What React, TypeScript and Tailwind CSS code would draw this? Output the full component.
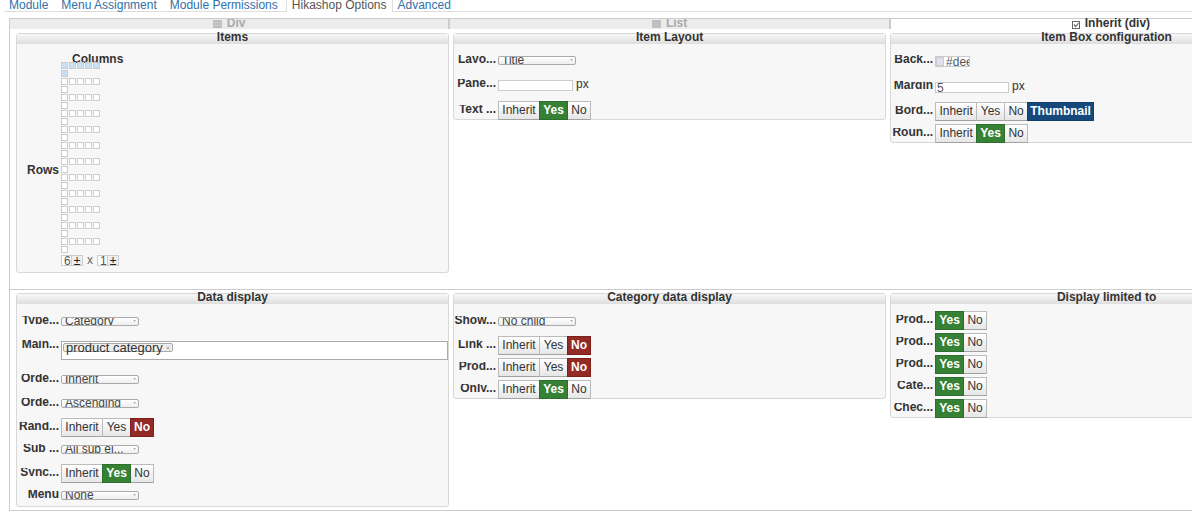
import type { ReactNode } from "react";

const navLinks = ["Module", "Menu Assignment", "Module Permissions", "Hikashop Options", "Advanced"];

function Panel({ title, children }: { title: string; children: ReactNode }) {
  return (
    <section className="self-start rounded-[3px] border border-[#d8d8d8] bg-[#f7f7f7]">
      <h2 className="h-[10px] bg-linear-to-b from-[#f8f8f8] to-[#dedede] text-center text-[12px] leading-[7px] font-bold text-[#333]">
        {title}
      </h2>
      {children}
    </section>
  );
}

const margins = {
  first: "mt-[12px]",
  lowerFirst: "mt-[13px]",
  wide: "mt-[15px]",
  medium: "mt-[10px]",
  snug: "mt-[9px]",
  small: "mt-[7px]",
  tight: "mt-[4px]",
};

function Field({
  label,
  id,
  gap = "wide",
  tall = false,
  children,
}: {
  label: string;
  id: string;
  gap?: keyof typeof margins;
  tall?: boolean;
  children: ReactNode;
}) {
  return (
    <div className={`flex items-start ${margins[gap]}`}>
      <label
        htmlFor={id}
        className={`mr-[2px] h-[8px] w-[42px] shrink-0 overflow-hidden text-right text-[12px] leading-[8px] font-bold whitespace-nowrap text-[#333] ${
          tall ? "mt-[4px]" : "-mt-px"
        }`}
      >
        {label}
      </label>
      {children}
    </div>
  );
}

function Select({ id, value }: { id: string; value: string }) {
  return (
    <div className="relative h-[9px] w-[78px]">
      <select
        id={id}
        className="block h-[9px] w-full appearance-none overflow-hidden rounded-[2px] border border-[#aaa] bg-linear-to-b from-white to-[#eee] pl-[3px] text-[12px] leading-[7px] text-[#444]"
      >
        <option>{value}</option>
      </select>
      <svg viewBox="0 0 4 3" className="pointer-events-none absolute top-[3px] right-[3px] h-[2px] w-[3px] fill-[#aaa]">
        <path d="M0 0H4L2 3Z" />
      </svg>
    </div>
  );
}

function Choices({ id, options, active }: { id: string; options: string[]; active: string }) {
  const colors: Record<string, string> = {
    Yes: "border-[#2c6e2c] bg-[#378137]",
    No: "border-[#7c1f1c] bg-[#942a25]",
    Thumbnail: "border-[#0f3f6b] bg-[#15497c]",
  };
  const widths: Record<string, string> = {
    Inherit: "w-[42px]",
    Yes: "w-[29px]",
    No: "w-[24px]",
    Thumbnail: "w-[67px]",
  };
  return (
    <div id={id} role="group" className="-mb-px flex">
      {options.map((o, i) => (
        <button
          key={o}
          type="button"
          aria-pressed={o === active}
          className={`h-[19px] border text-center text-[12px] leading-[17px] ${i > 0 ? "-ml-px" : ""} ${widths[o]} ${
            o === active
              ? `relative font-bold text-white ${colors[o]}`
              : "border-[#bbb] border-b-[#a2a2a2] bg-linear-to-b from-white to-[#e6e6e6] text-[#333]"
          }`}
        >
          {o}
        </button>
      ))}
    </div>
  );
}

function Counter({ label, value }: { label: string; value: string }) {
  return (
    <span className="flex h-[11px]">
      <input
        aria-label={label}
        defaultValue={value}
        className="h-[11px] w-[11px] border border-[#ccc] bg-white pl-[2px] text-[12px] leading-[9px] text-[#555]"
      />
      <button
        type="button"
        className="-ml-px h-[11px] w-[12px] border border-[#ccc] bg-[#eee] text-[12px] leading-[8px] text-[#222]"
      >
        ±
      </button>
    </span>
  );
}

function TypeIcon({ kind }: { kind: "div" | "list" | "inherit" }) {
  if (kind === "inherit") {
    return (
      <svg viewBox="0 0 8 8" className="mt-[2px] h-[8px] w-[8px]" fill="none" stroke="#666">
        <rect x="0.5" y="0.5" width="7" height="7" />
        <path d="M2 3.5L3.7 5.5L6.5 2" strokeWidth="1.2" />
      </svg>
    );
  }
  return (
    <svg viewBox="0 0 9 8" className="mt-[1px] h-[8px] w-[9px]">
      <rect width="9" height="8" rx="1" fill="#bdbdbd" />
      {kind === "div" ? (
        <path d="M1 2.5H8M1 5.5H8" stroke="#dadada" strokeDasharray="1.5 1" />
      ) : (
        <path d="M1 2.5H8M1 4.5H8M1 6.5H8" stroke="#cacaca" strokeWidth="0.6" />
      )}
    </svg>
  );
}

export default function App() {
  const triple = ["Inherit", "Yes", "No"];
  return (
    <main className="overflow-hidden bg-white pb-3 font-['Liberation_Sans',Arial,sans-serif] text-[12px] text-[#333]">
      <nav className="ml-1 flex h-[12px] border-b border-[#ddd]">
        {navLinks.map((l) => (
          <a
            key={l}
            href="#"
            className={`h-[12px] leading-[10px] whitespace-nowrap ${
              l === "Hikashop Options"
                ? "border-x border-[#ddd] bg-white px-[5px] text-[#555]"
                : "pr-[8px] pl-[5px] text-[#3071a9]"
            }`}
          >
            {l}
          </a>
        ))}
      </nav>

      <div className="mt-[6px] ml-[9px] w-[111%] border border-[#ccc]">
        <div className="grid grid-cols-3 text-[12px] leading-[8px] font-bold">
          <button type="button" className="flex h-[10px] justify-center gap-[5px] overflow-hidden border-r-2 border-[#ccc] bg-[#ececec] text-[#aaa]">
            <TypeIcon kind="div" />
            Div
          </button>
          <button type="button" className="flex h-[10px] justify-center gap-[5px] overflow-hidden border-r-2 border-[#ccc] bg-[#ececec] text-[#aaa]">
            <TypeIcon kind="list" />
            List
          </button>
          <button type="button" className="flex h-[10px] justify-center gap-[5px] bg-white">
            <TypeIcon kind="inherit" />
            Inherit (div)
          </button>
        </div>

        <div className="grid grid-cols-3 gap-x-1 border-b border-[#ccc] pt-1 pr-2 pb-4 pl-[6px]">
          <Panel title="Items">
            <div className="mt-[11px] ml-[55px] h-[7px] text-[12px] leading-[8px] font-bold">Columns</div>
            <div className="flex items-center">
              <div className="w-[42px] shrink-0 pt-6 text-right text-[12px] font-bold">Rows</div>
              <div className="relative ml-[2px] grid grid-cols-5 gap-px">
                {Array.from({ length: 72 }, (_, i) => (
                  <button
                    key={i}
                    type="button"
                    aria-label={`${Math.floor(i / 6) + 1} x ${(i % 6) + 1}`}
                    className={`h-[7px] w-[7px] border border-[#ccc] ${i < 6 ? "bg-[#c9dff3]" : "bg-white"} ${
                      i % 6 === 0 ? "col-start-1" : ""
                    }`}
                  />
                ))}
              </div>
            </div>
            <div className="mt-[2px] mb-[6px] ml-[44px] flex items-center gap-1 leading-[11px] text-[#666]">
              <Counter label="Columns" value="6" />x<Counter label="Rows" value="1" />
            </div>
          </Panel>
          <Panel title="Item Layout">
            <Field label="Layo..." id="layout" gap="first">
              <Select id="layout" value="Title" />
            </Field>
            <Field label="Pane..." id="pane">
              <input id="pane" className="h-[11px] w-[75px] border border-[#ccc] bg-white" />
              <span className="ml-[3px] leading-[9px]">px</span>
            </Field>
            <Field label="Text ..." id="textcenter" gap="medium" tall>
              <Choices id="textcenter" options={triple} active="Yes" />
            </Field>
          </Panel>
          <Panel title="Item Box configuration">
            <Field label="Back..." id="background" gap="first">
              <span className="flex h-[11px] border border-[#ccc] bg-white">
                <span className="w-[8px] border border-[#ccc] bg-[#dedeee]" />
                <input
                  id="background"
                  defaultValue="#deeaf4"
                  className="h-[9px] w-[25px] pl-[2px] text-[12px] leading-[9px] text-[#555]"
                />
              </span>
            </Field>
            <Field label="Margin" id="margin">
              <input
                id="margin"
                defaultValue="5"
                className="h-[11px] w-[74px] border border-[#ccc] bg-white pl-px text-[12px] leading-[9px] text-[#555]"
              />
              <span className="ml-[3px] leading-[9px]">px</span>
            </Field>
            <Field label="Bord..." id="border" gap="snug" tall>
              <Choices id="border" options={[...triple, "Thumbnail"]} active="Thumbnail" />
            </Field>
            <Field label="Roun..." id="rounded" gap="tight" tall>
              <Choices id="rounded" options={triple} active="Yes" />
            </Field>
          </Panel>
        </div>

        <div className="grid grid-cols-3 gap-x-1 pt-[3px] pr-2 pb-[3px] pl-[6px]">
          <Panel title="Data display">
            <div className="pb-[6px]">
              <Field label="Type..." id="type" gap="lowerFirst">
                <Select id="type" value="Category" />
              </Field>
              <Field label="Main..." id="main">
                <div id="main" className="h-[19px] flex-1 border border-[#aaa] bg-white pt-px pl-px">
                  <span className="flex h-[9px] w-[110px] items-center justify-between rounded-[2px] border border-[#aaa] bg-[#eee] px-[2px] text-[13px] leading-[7px] text-[#333]">
                    product category
                    <svg viewBox="0 0 5 5" className="h-[4px] w-[4px]" stroke="#999">
                      <path d="M0.5 0.5L4.5 4.5M4.5 0.5L0.5 4.5" />
                    </svg>
                  </span>
                </div>
              </Field>
              <Field label="Orde..." id="order">
                <Select id="order" value="Inherit" />
              </Field>
              <Field label="Orde..." id="direction">
                <Select id="direction" value="Ascending" />
              </Field>
              <Field label="Rand..." id="random" gap="medium" tall>
                <Choices id="random" options={triple} active="No" />
              </Field>
              <Field label="Sub ..." id="sub" gap="snug">
                <Select id="sub" value="All sub el..." />
              </Field>
              <Field label="Sync..." id="sync" gap="medium" tall>
                <Choices id="sync" options={triple} active="Yes" />
              </Field>
              <Field label="Menu" id="menu" gap="snug">
                <Select id="menu" value="None" />
              </Field>
            </div>
          </Panel>
          <Panel title="Category data display">
            <Field label="Show..." id="show" gap="lowerFirst">
              <Select id="show" value="No child" />
            </Field>
            <Field label="Link ..." id="link" gap="medium" tall>
              <Choices id="link" options={triple} active="No" />
            </Field>
            <Field label="Prod..." id="number" gap="tight" tall>
              <Choices id="number" options={triple} active="No" />
            </Field>
            <Field label="Only..." id="only" gap="tight" tall>
              <Choices id="only" options={triple} active="Yes" />
            </Field>
          </Panel>
          <Panel title="Display limited to">
            {["Prod...", "Prod...", "Prod...", "Cate...", "Chec..."].map((label, i) => (
              <Field key={i} label={label} id={`limit${i}`} gap={i === 0 ? "small" : "tight"} tall>
                <Choices id={`limit${i}`} options={["Yes", "No"]} active="Yes" />
              </Field>
            ))}
          </Panel>
        </div>
      </div>
    </main>
  );
}
